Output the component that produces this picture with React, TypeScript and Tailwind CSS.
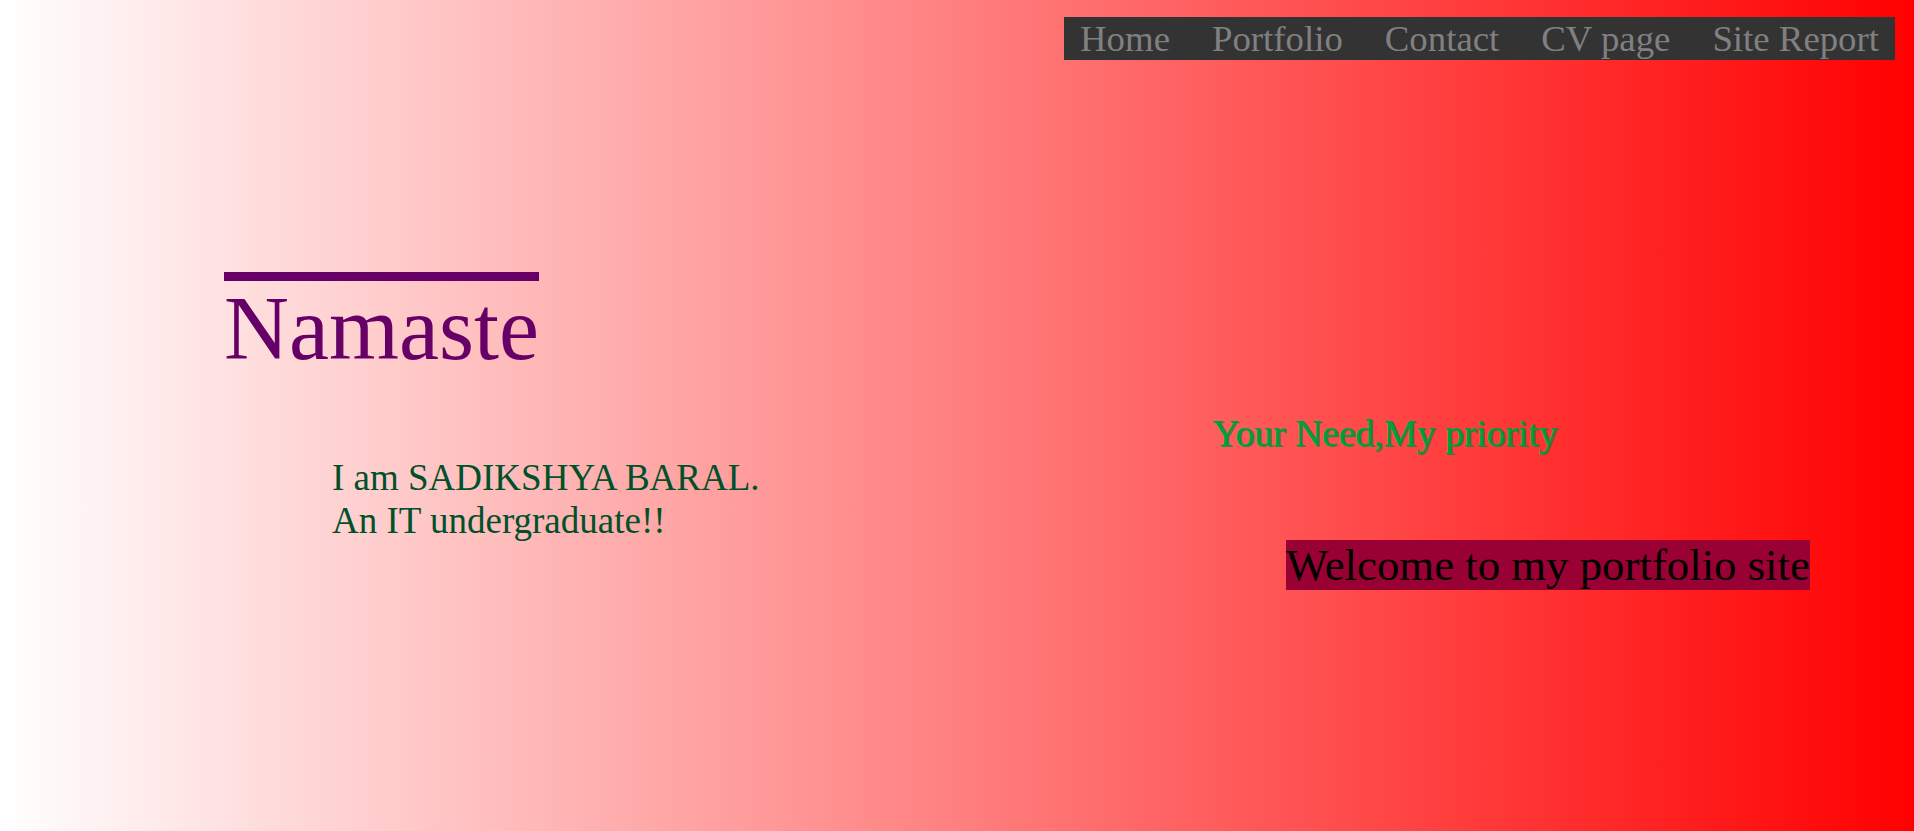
const links = ['Home', 'Portfolio', 'Contact', 'CV page', 'Site Report'];

export default function App() {
  return (
    <div className="min-h-screen bg-[linear-gradient(to_right,#ffffff,#ff0000)] font-['Liberation_Serif','Times_New_Roman',serif]">
      <nav className="flex justify-end pt-[17px] pr-[19px]">
        <ul className="flex h-[43px] items-center gap-[42px] bg-[#333333] px-4 pt-[2px] text-[36.8px] leading-none text-[#808080]">
          {links.map((l) => (
            <li key={l}>
              <a href="#">{l}</a>
            </li>
          ))}
        </ul>
      </nav>

      <main className="flex">
        <section className="w-[1212px] shrink-0 pl-[224px] pt-[212px]">
          <h1 className="inline-block border-t-[9px] border-[#660066] text-[90px] leading-[1.06] text-[#660066]">
            Namaste
          </h1>
          <p className="mt-[81px] pl-[108px] text-[37px] leading-[1.14] text-[#00502a]">
            I am SADIKSHYA BARAL.
            <br />
            An IT undergraduate!!
          </p>
        </section>

        <section className="pt-[352px]">
          <h2 className="text-[37.5px] leading-[1.149] text-[#00a03c] [text-shadow:1.5px_1px_0_rgba(0,140,50,0.75)]">
            Your Need,My priority
          </h2>
          <p className="mt-[85px] pl-[74px]">
            <span className="bg-[#990033] text-[44.8px] leading-[1.149] text-black">
              Welcome to my portfolio site
            </span>
          </p>
        </section>
      </main>
    </div>
  );
}
